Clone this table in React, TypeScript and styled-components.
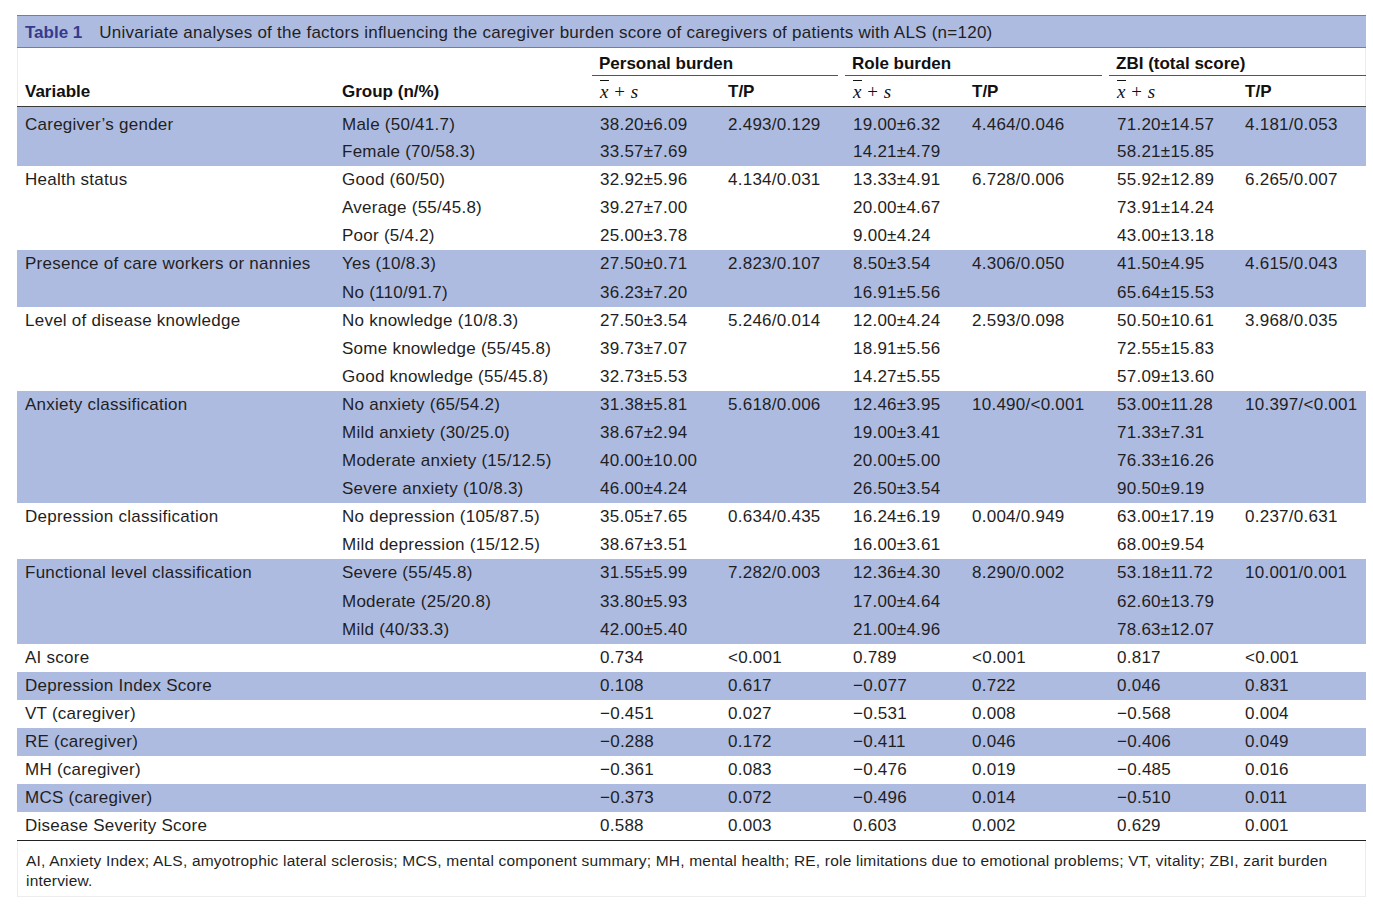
import React from "react";
import styled, { createGlobalStyle } from "styled-components";

const Global = createGlobalStyle`
  html, body { margin: 0; padding: 0; background: #ffffff; }
  body { font-family: "Liberation Sans", Arial, sans-serif; color: #1f1f1f; }
`;

const Page = styled.div`
  padding: 15px 7px 20px 17px;
  width: 1349px;
`;

const Frame = styled.div`
  border-left: 1px solid #ededed;
  border-right: 1px solid #ededed;
  border-bottom: 1px solid #ededed;
  box-sizing: border-box;
  width: 1349px;
`;

const Title = styled.div`
  background: #aebbe1;
  border-top: 1px solid #7d7f88;
  border-bottom: 1px solid #7d7f88;
  height: 33px;
  display: flex;
  align-items: center;
  padding: 2px 0 0 8px;
  box-sizing: border-box;
  font-size: 17px;
  letter-spacing: 0.25px;
  color: #1f1f1f;
  margin: 0 -1px;
`;

const TitleLabel = styled.span`
  font-weight: 700;
  color: #363a8e;
  margin-right: 17px;
  letter-spacing: 0;
`;

const Table = styled.table`
  border-collapse: collapse;
  table-layout: fixed;
  width: 1349px;
  margin: 0 -1px;
  font-size: 17px;
  letter-spacing: 0.25px;
`;

const Col = styled.col<{ $w: number }>`
  width: ${(p) => p.$w}px;
`;

const HeadCell = styled.th`
  text-align: left;
  font-weight: 700;
  padding: 2px 0 0 8px;
  color: #111;
  white-space: nowrap;
  letter-spacing: 0;
`;

const GroupHead = styled.th<{ $gap: number }>`
  text-align: left;
  font-weight: 700;
  padding: 0 ${(p) => p.$gap}px 0 0;
  color: #111;
  vertical-align: bottom;
  letter-spacing: 0;
`;

const GroupLabel = styled.div`
  border-bottom: 1px solid #555;
  padding: 3px 0 0 7px;
  height: 27px;
  box-sizing: border-box;
  display: flex;
  align-items: center;
`;

const TopRow = styled.tr`
  height: 28px;
`;

const SubRow = styled.tr`
  height: 30px;
  border-bottom: 1.5px solid #3a3a3a;
`;

const Body = styled.tbody<{ $shaded: boolean; $first?: boolean }>`
  background: ${(p) => (p.$shaded ? "#aebbe1" : "#ffffff")};
  & > tr:first-child > td {
    padding-top: ${(p) => (p.$first ? "6px" : "0")};
  }
  & > tr:first-child {
    height: ${(p) => (p.$first ? "32px" : "28.1px")};
  }
`;

const Row = styled.tr`
  height: 28.1px;
`;

const Cell = styled.td`
  padding: 0 0 0 8px;
  white-space: nowrap;
  vertical-align: middle;
  color: #1f1f1f;
`;

const LastRow = styled.tr`
  border-bottom: 1.5px solid #222;
`;

const Math = styled.span`
  font-family: "Liberation Serif", "Times New Roman", serif;
  font-weight: 400;
  font-size: 19px;
  letter-spacing: 0.5px;
`;

const MathVar = styled.i`
  text-decoration: overline;
  text-decoration-thickness: 1px;
`;

const Foot = styled.div`
  padding: 10px 8px 5px 8px;
  font-size: 15.5px;
  letter-spacing: 0.2px;
  line-height: 20px;
  color: #1f1f1f;
`;

type DataRow = string[];
type Group = { label: string; shaded: boolean; rows: DataRow[] };

const groups: Group[] = [
  {
    label: "Caregiver’s gender",
    shaded: true,
    rows: [
      ["Male (50/41.7)", "38.20±6.09", "2.493/0.129", "19.00±6.32", "4.464/0.046", "71.20±14.57", "4.181/0.053"],
      ["Female (70/58.3)", "33.57±7.69", "", "14.21±4.79", "", "58.21±15.85", ""],
    ],
  },
  {
    label: "Health status",
    shaded: false,
    rows: [
      ["Good (60/50)", "32.92±5.96", "4.134/0.031", "13.33±4.91", "6.728/0.006", "55.92±12.89", "6.265/0.007"],
      ["Average (55/45.8)", "39.27±7.00", "", "20.00±4.67", "", "73.91±14.24", ""],
      ["Poor (5/4.2)", "25.00±3.78", "", "9.00±4.24", "", "43.00±13.18", ""],
    ],
  },
  {
    label: "Presence of care workers or nannies",
    shaded: true,
    rows: [
      ["Yes (10/8.3)", "27.50±0.71", "2.823/0.107", "8.50±3.54", "4.306/0.050", "41.50±4.95", "4.615/0.043"],
      ["No (110/91.7)", "36.23±7.20", "", "16.91±5.56", "", "65.64±15.53", ""],
    ],
  },
  {
    label: "Level of disease knowledge",
    shaded: false,
    rows: [
      ["No knowledge (10/8.3)", "27.50±3.54", "5.246/0.014", "12.00±4.24", "2.593/0.098", "50.50±10.61", "3.968/0.035"],
      ["Some knowledge (55/45.8)", "39.73±7.07", "", "18.91±5.56", "", "72.55±15.83", ""],
      ["Good knowledge (55/45.8)", "32.73±5.53", "", "14.27±5.55", "", "57.09±13.60", ""],
    ],
  },
  {
    label: "Anxiety classification",
    shaded: true,
    rows: [
      ["No anxiety (65/54.2)", "31.38±5.81", "5.618/0.006", "12.46±3.95", "10.490/<0.001", "53.00±11.28", "10.397/<0.001"],
      ["Mild anxiety (30/25.0)", "38.67±2.94", "", "19.00±3.41", "", "71.33±7.31", ""],
      ["Moderate anxiety (15/12.5)", "40.00±10.00", "", "20.00±5.00", "", "76.33±16.26", ""],
      ["Severe anxiety (10/8.3)", "46.00±4.24", "", "26.50±3.54", "", "90.50±9.19", ""],
    ],
  },
  {
    label: "Depression classification",
    shaded: false,
    rows: [
      ["No depression (105/87.5)", "35.05±7.65", "0.634/0.435", "16.24±6.19", "0.004/0.949", "63.00±17.19", "0.237/0.631"],
      ["Mild depression (15/12.5)", "38.67±3.51", "", "16.00±3.61", "", "68.00±9.54", ""],
    ],
  },
  {
    label: "Functional level classification",
    shaded: true,
    rows: [
      ["Severe (55/45.8)", "31.55±5.99", "7.282/0.003", "12.36±4.30", "8.290/0.002", "53.18±11.72", "10.001/0.001"],
      ["Moderate (25/20.8)", "33.80±5.93", "", "17.00±4.64", "", "62.60±13.79", ""],
      ["Mild (40/33.3)", "42.00±5.40", "", "21.00±4.96", "", "78.63±12.07", ""],
    ],
  },
  { label: "AI score", shaded: false, rows: [["", "0.734", "<0.001", "0.789", "<0.001", "0.817", "<0.001"]] },
  { label: "Depression Index Score", shaded: true, rows: [["", "0.108", "0.617", "−0.077", "0.722", "0.046", "0.831"]] },
  { label: "VT (caregiver)", shaded: false, rows: [["", "−0.451", "0.027", "−0.531", "0.008", "−0.568", "0.004"]] },
  { label: "RE (caregiver)", shaded: true, rows: [["", "−0.288", "0.172", "−0.411", "0.046", "−0.406", "0.049"]] },
  { label: "MH (caregiver)", shaded: false, rows: [["", "−0.361", "0.083", "−0.476", "0.019", "−0.485", "0.016"]] },
  { label: "MCS (caregiver)", shaded: true, rows: [["", "−0.373", "0.072", "−0.496", "0.014", "−0.510", "0.011"]] },
];

const lastGroup: Group = {
  label: "Disease Severity Score",
  shaded: false,
  rows: [["", "0.588", "0.003", "0.603", "0.002", "0.629", "0.001"]],
};

const widths = [317, 258, 128, 125, 119, 145, 128, 129];

const MeanHead = () => (
  <Math>
    <MathVar>x</MathVar> + <i>s</i>
  </Math>
);

const Cells = ({ label, row }: { label: string; row: DataRow }) => (
  <>
    <Cell>{label}</Cell>
    {row.map((v, i) => (
      <Cell key={i}>{v}</Cell>
    ))}
  </>
);

export default function App() {
  return (
    <Page>
      <Global />
      <Frame>
        <Title>
          <TitleLabel>Table 1</TitleLabel>
          Univariate analyses of the factors influencing the caregiver burden score of caregivers of patients with ALS (n=120)
        </Title>
        <Table>
          <colgroup>
            {widths.map((w, i) => (
              <Col key={i} $w={w} />
            ))}
          </colgroup>
          <thead>
            <TopRow>
              <HeadCell />
              <HeadCell />
              <GroupHead colSpan={2} $gap={7}>
                <GroupLabel>Personal burden</GroupLabel>
              </GroupHead>
              <GroupHead colSpan={2} $gap={7}>
                <GroupLabel>Role burden</GroupLabel>
              </GroupHead>
              <GroupHead colSpan={2} $gap={0}>
                <GroupLabel>ZBI (total score)</GroupLabel>
              </GroupHead>
            </TopRow>
            <SubRow>
              <HeadCell>Variable</HeadCell>
              <HeadCell>Group (n/%)</HeadCell>
              <HeadCell>
                <MeanHead />
              </HeadCell>
              <HeadCell>T/P</HeadCell>
              <HeadCell>
                <MeanHead />
              </HeadCell>
              <HeadCell>T/P</HeadCell>
              <HeadCell>
                <MeanHead />
              </HeadCell>
              <HeadCell>T/P</HeadCell>
            </SubRow>
          </thead>
          {groups.map((g, gi) => (
            <Body key={g.label} $shaded={g.shaded} $first={gi === 0}>
              {g.rows.map((r, ri) => (
                <Row key={ri}>
                  <Cells label={ri === 0 ? g.label : ""} row={r} />
                </Row>
              ))}
            </Body>
          ))}
          <Body $shaded={false}>
            <LastRow>
              <Cells label={lastGroup.label} row={lastGroup.rows[0]} />
            </LastRow>
          </Body>
        </Table>
        <Foot>
          AI, Anxiety Index; ALS, amyotrophic lateral sclerosis; MCS, mental component summary; MH, mental health; RE, role limitations due to emotional problems; VT, vitality; ZBI, zarit burden interview.
        </Foot>
      </Frame>
    </Page>
  );
}
